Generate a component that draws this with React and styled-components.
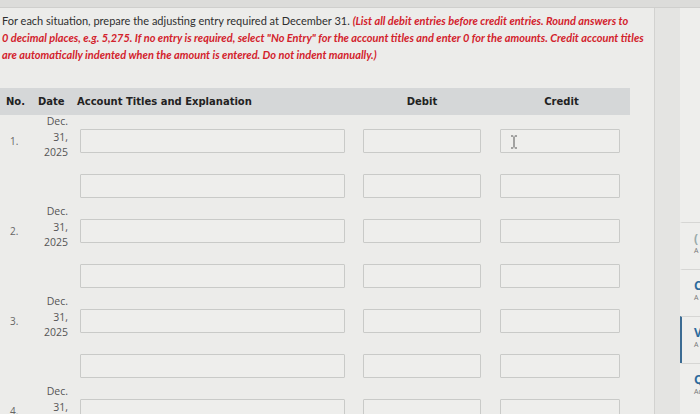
import React from "react";
import styled, { createGlobalStyle } from "styled-components";

const GlobalStyle = createGlobalStyle`
  html, body {
    margin: 0;
    padding: 0;
    width: 700px;
    height: 414px;
    overflow: hidden;
    background: #e4e4e2;
  }
`;

const Page = styled.div`
  display: flex;
  flex-direction: column;
  width: 700px;
  height: 414px;
  overflow: hidden;
`;

const TopStrip = styled.div`
  height: 7px;
  flex-shrink: 0;
  background: #dcdcda;
  border-bottom: 1px solid #cfcfcd;
`;

const Body = styled.div`
  display: flex;
  flex: 1;
  min-height: 0;
`;

const Panel = styled.main`
  width: 655px;
  flex-shrink: 0;
  background: #ececea;
  border-right: 1px solid #d2d2d0;
  padding: 4px 0 0 2px;
  box-sizing: border-box;
  overflow: hidden;
`;

const Gutter = styled.div`
  width: 25px;
  flex-shrink: 0;
  background: #e4e4e2;
`;

const Instructions = styled.p`
  margin: 0;
  font-family: Lato, "Liberation Sans", sans-serif;
  font-size: 11px;
  line-height: 17px;
  color: #2f2f2f;
  white-space: nowrap;
`;

const Note = styled.em`
  color: #d3222c;
  font-weight: 700;
  font-style: italic;
`;

const Table = styled.div`
  margin: 25px 0 0 -2px;
  width: 630px;
  display: flex;
  flex-direction: column;
`;

const columns = "36px 32px 277px 136px 139px";

const HeadRow = styled.div`
  display: grid;
  grid-template-columns: ${columns};
  align-items: center;
  height: 27px;
  margin-bottom: 3px;
  background: #d5d7d8;
  font-family: "DejaVu Sans", Verdana, sans-serif;
  font-size: 10px;
  font-weight: 700;
  color: #222;
`;

const HeadCell = styled.div`
  padding-left: ${(p) => p.$pad || 0}px;
  text-align: ${(p) => p.$align || "left"};
  white-space: nowrap;
`;

const Entry = styled.div`
  display: grid;
  grid-template-columns: ${columns};
  grid-template-rows: 45px 45px;
  align-items: center;
`;

const Num = styled.div`
  grid-row: 1;
  grid-column: 1;
  padding-left: 10px;
  font-family: "Open Sans", "DejaVu Sans", sans-serif;
  font-size: 10px;
  color: #666;
`;

const DateCell = styled.div`
  grid-row: 1;
  grid-column: 2;
  text-align: right;
  font-family: "Open Sans", "DejaVu Sans", sans-serif;
  font-size: 10.5px;
  line-height: 15.5px;
  color: #555;
  margin-top: -6px;
`;

const Field = styled.div`
  position: relative;
  grid-row: ${(p) => p.$row};
  grid-column: ${(p) => p.$col};
  width: ${(p) => p.$w}px;
  height: 24px;
  margin-left: ${(p) => p.$left}px;
  box-sizing: border-box;
  border: 1px solid #c9cac8;
  border-radius: 1px;
  background: #eeeeec;
`;

const Cursor = styled.svg`
  position: absolute;
  left: 9px;
  top: 5px;
`;

const Side = styled.aside`
  flex: 1;
  display: flex;
  flex-direction: column;
  padding-top: 214px;
  background: #eeeeec;
  overflow: hidden;
`;

const SideItem = styled.div`
  height: 47px;
  box-sizing: border-box;
  padding: 9px 0 0 12px;
  border-top: 1px solid #d6d6d4;
  border-left: 2px solid ${(p) => (p.$active ? "#3b6b93" : "transparent")};
  white-space: nowrap;
`;

const SideTitle = styled.div`
  font-family: "Open Sans", sans-serif;
  font-size: 12px;
  font-weight: 700;
  line-height: 14px;
  color: ${(p) => (p.$muted ? "#9aa" : "#2c6a9c")};
`;

const SideSub = styled.div`
  font-family: "Open Sans", sans-serif;
  font-size: 7px;
  line-height: 10px;
  color: #777;
`;

const entries = [1, 2, 3, 4];
const fields = [
  { col: 3, left: 12, w: 265 },
  { col: 4, left: 18, w: 118 },
  { col: 5, left: 19, w: 120 },
];
const sideItems = [
  { title: "(", sub: "A", muted: true },
  { title: "C", sub: "A" },
  { title: "V", sub: "A", active: true },
  { title: "Q", sub: "Ac" },
];

const IBeam = () => (
  <Cursor width="8" height="14" viewBox="0 0 8 14">
    <path
      d="M1 1h2.2M4.8 1H7M4 1.5v11M1 13h2.2M4.8 13H7"
      stroke="#555"
      strokeWidth="1"
      fill="none"
    />
  </Cursor>
);

const App = () => {
  return (
    <Page>
      <GlobalStyle />
      <TopStrip />
      <Body>
        <Panel>
          <Instructions>
            For each situation, prepare the adjusting entry required at
            December 31.{" "}
            <Note>
              (List all debit entries before credit entries. Round answers to
              <br />
              0 decimal places, e.g. 5,275. If no entry is required, select
              "No Entry" for the account titles and enter 0 for the amounts.
              Credit account titles
              <br />
              are automatically indented when the amount is entered. Do not
              indent manually.)
            </Note>
          </Instructions>

          <Table>
            <HeadRow>
              <HeadCell $pad={6}>No.</HeadCell>
              <HeadCell $pad={2}>Date</HeadCell>
              <HeadCell $pad={9}>Account Titles and Explanation</HeadCell>
              <HeadCell $align="center" $pad={18}>Debit</HeadCell>
              <HeadCell $align="center" $pad={22}>Credit</HeadCell>
            </HeadRow>

            {entries.map((n) => (
              <Entry key={n}>
                <Num>{n}.</Num>
                <DateCell>
                  Dec.
                  <br />
                  31,
                  <br />
                  2025
                </DateCell>
                {[1, 2].map((row) =>
                  fields.map((f) => (
                    <Field
                      key={`${row}-${f.col}`}
                      $row={row}
                      $col={f.col}
                      $left={f.left}
                      $w={f.w}
                    >
                      {n === 1 && row === 1 && f.col === 5 && <IBeam />}
                    </Field>
                  ))
                )}
              </Entry>
            ))}
          </Table>
        </Panel>
        <Gutter />
        <Side>
          {sideItems.map((item) => (
            <SideItem key={item.title} $active={item.active}>
              <SideTitle $muted={item.muted}>{item.title}</SideTitle>
              <SideSub>{item.sub}</SideSub>
            </SideItem>
          ))}
        </Side>
      </Body>
    </Page>
  );
};

export default App;
